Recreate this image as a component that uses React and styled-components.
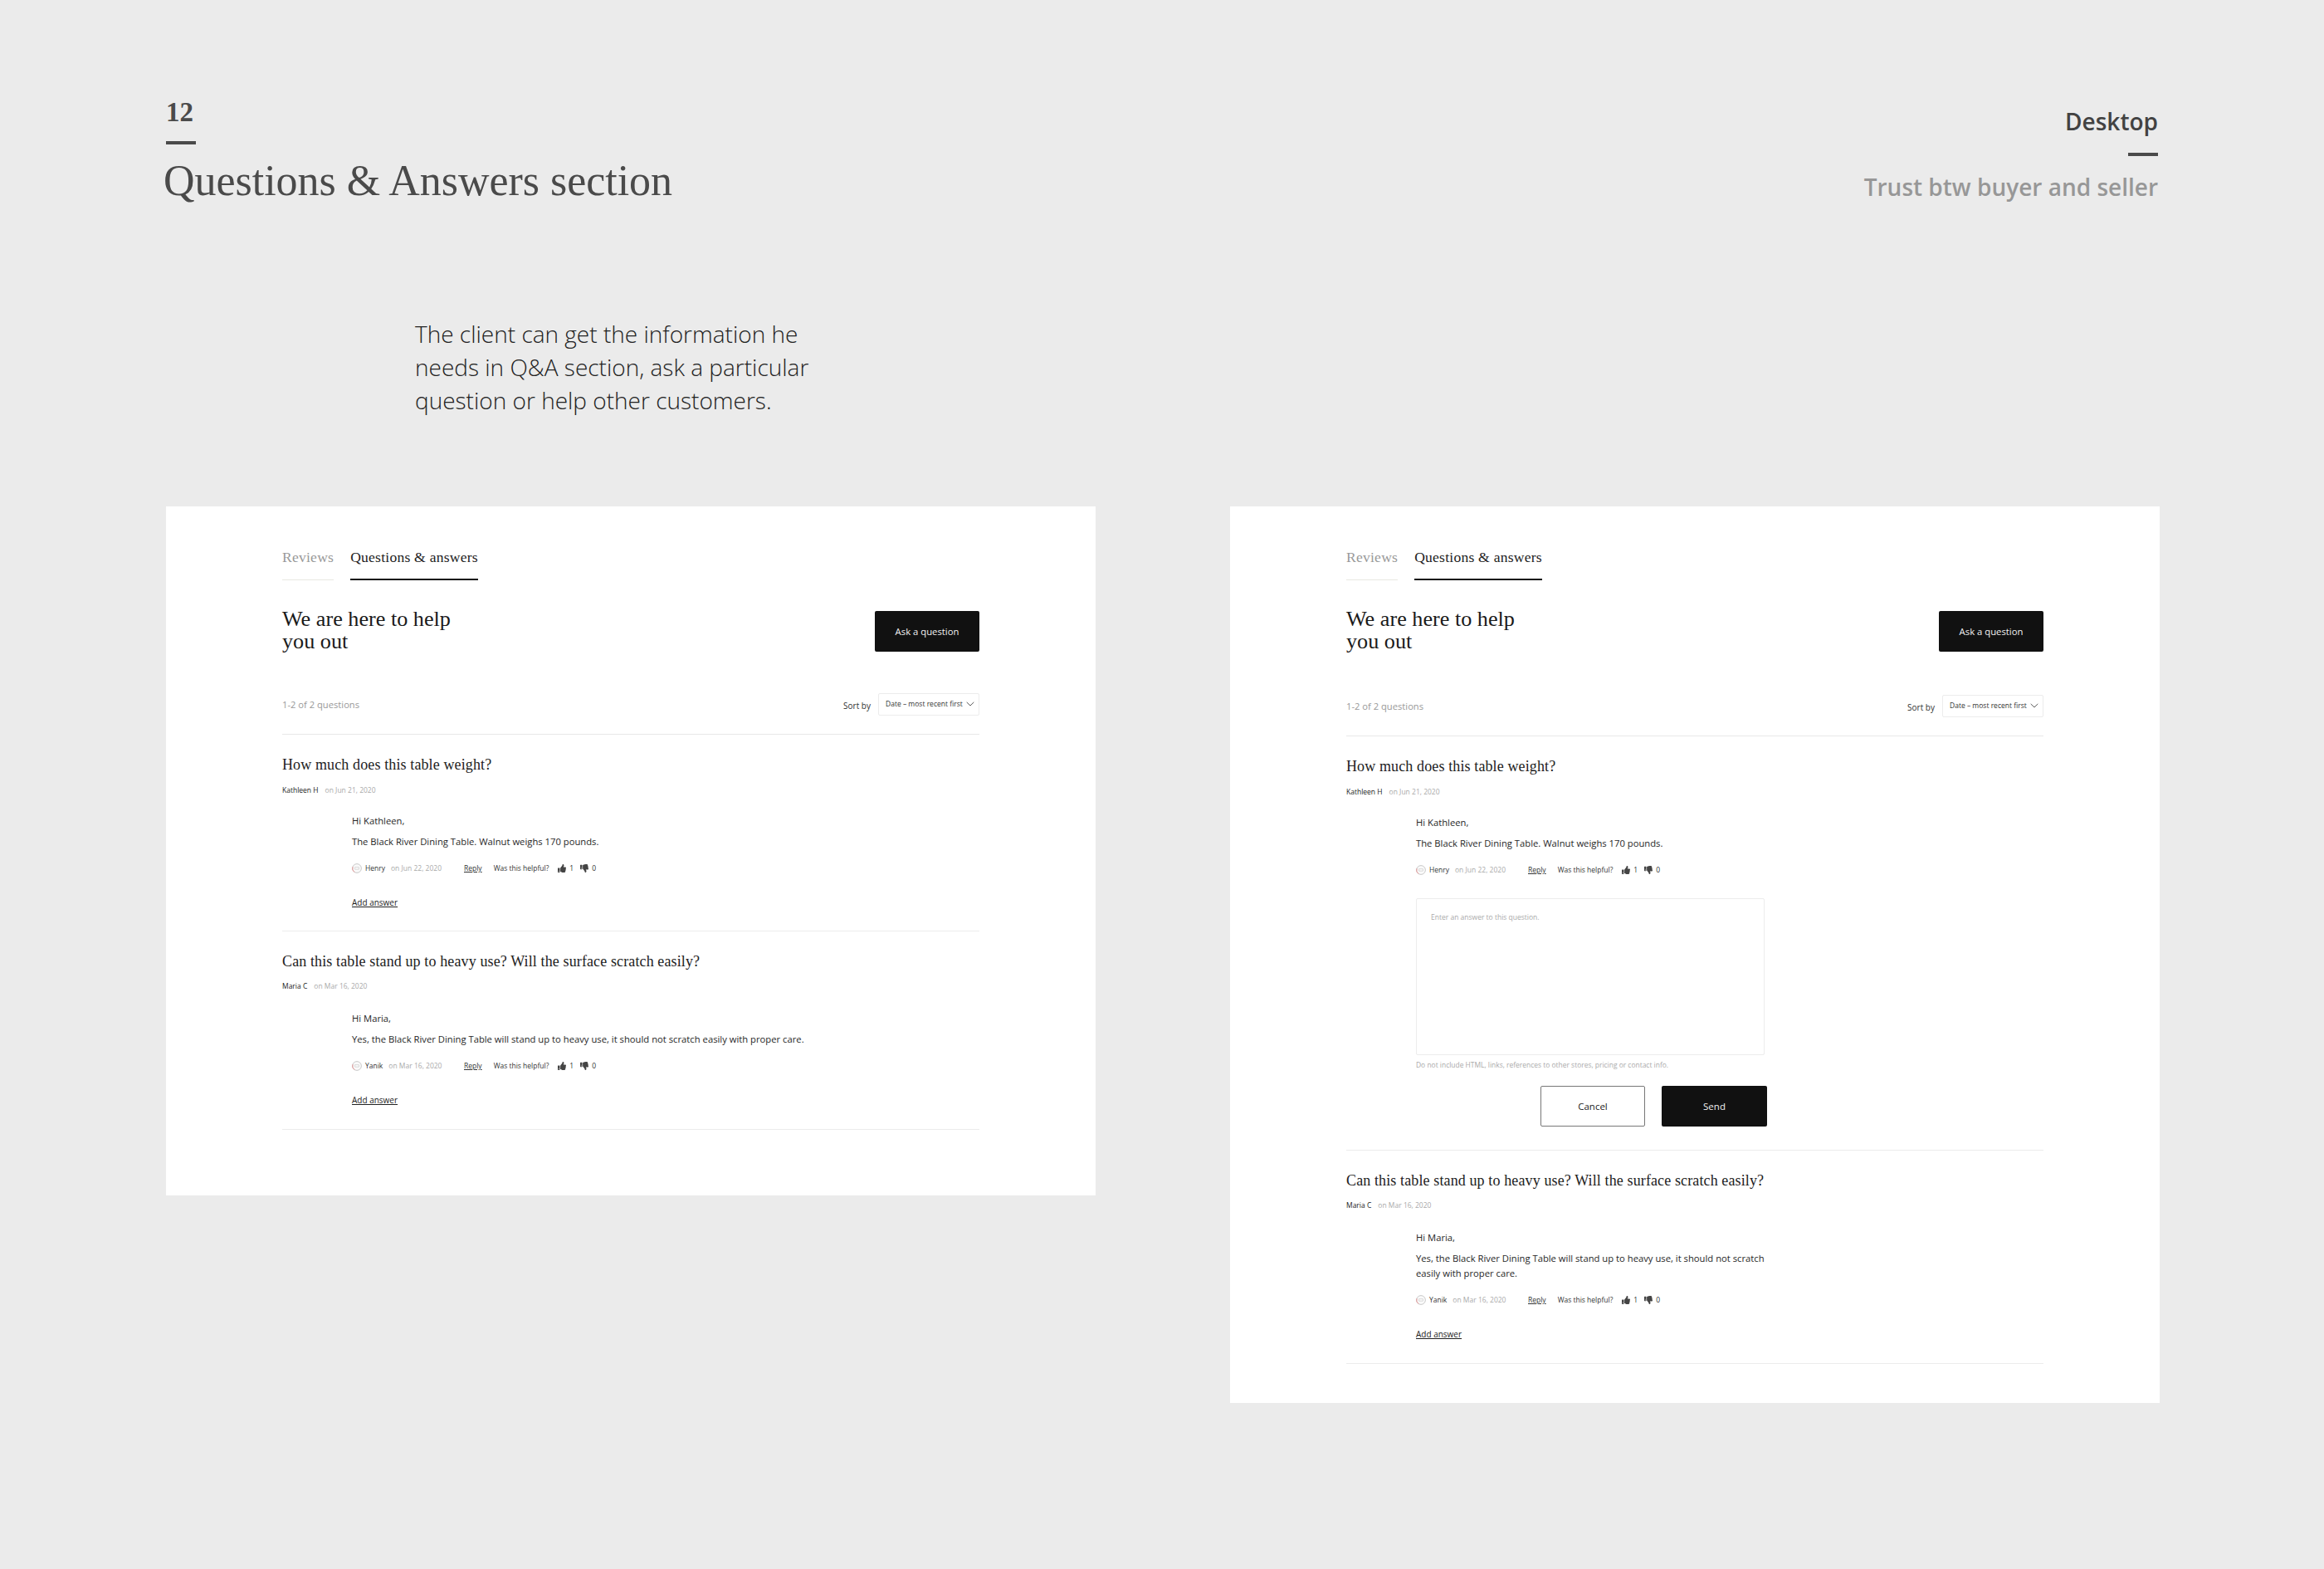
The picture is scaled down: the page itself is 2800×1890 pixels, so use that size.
import React from "react";
import styled, { createGlobalStyle } from "styled-components";
import { FaThumbsUp, FaThumbsDown } from "react-icons/fa";

const SERIF = `"Liberation Serif", "Times New Roman", serif`;
const SANS = `"Open Sans", "Noto Sans", sans-serif`;

const Global = createGlobalStyle`
  html, body { margin: 0; padding: 0; background: #ebebeb; }
  * { box-sizing: border-box; }
`;

const Page = styled.div`
  width: 2800px;
  height: 1890px;
  background: #ebebeb;
  padding: 118px 198px 0 200px;
  font-family: ${SANS};
  overflow: hidden;
`;
const Header = styled.header`
  display: flex;
  justify-content: space-between;
  align-items: flex-start;
  height: 264px;
  padding-right: 2px;
`;
const HeaderLeft = styled.div`
  display: flex;
  flex-direction: column;
  align-items: flex-start;
`;
const SectionNumber = styled.div`
  font: 700 33px/34px ${SERIF};
  color: #4a4a4a;
  height: 34px;
`;
const HeaderRule = styled.div`
  width: 36px;
  height: 4px;
  background: #4a4a4a;
  margin-top: ${p => p.$top}px;
`;
const Title = styled.h1`
  margin: 13px 0 0 -3px;
  font: 400 52px/62px ${SERIF};
  letter-spacing: -0.03px;
  color: #4a4a4a;
  white-space: nowrap;
`;
const HeaderRight = styled.div`
  display: flex;
  flex-direction: column;
  align-items: flex-end;
  padding-top: 9px;
`;
const Platform = styled.div`
  font: 600 28px/38px ${SANS};
  color: #424242;
`;
const Theme = styled.div`
  margin-top: 17px;
  font: 600 28px/40px ${SANS};
  color: #979797;
`;
const Intro = styled.p`
  margin: 0 0 0 300px;
  width: 520px;
  height: 228px;
  font: 300 28px/40px ${SANS};
  color: #222;
`;
const Cards = styled.div`
  display: flex;
  justify-content: space-between;
  align-items: flex-start;
`;
const Card = styled.section`
  width: 1120px;
  height: ${p => p.$height}px;
  background: #fff;
  padding: 49px 140px 0;
`;
const Tabs = styled.nav`
  display: flex;
  gap: 20px;
`;
const Tab = styled.div`
  font: 400 17.6px/24px ${SERIF};
  letter-spacing: 0.22px;
  color: ${p => (p.$active ? "#222" : "#999")};
  padding-bottom: 13px;
  border-bottom: ${p => (p.$active ? "2px solid #111" : "1px solid #e8e8e2")};
  height: 40px;
`;
const Lead = styled.div`
  display: flex;
  justify-content: space-between;
  align-items: flex-end;
  margin-top: 33px;
`;
const Heading = styled.h2`
  margin: 0;
  font: 400 26.2px/27px ${SERIF};
  color: #1a1a1a;
`;
const DarkButton = styled.button`
  width: ${p => p.$w}px;
  height: 49px;
  border: 0;
  border-radius: 2px;
  background: #111;
  color: #f2f2f2;
  font: 400 ${p => p.$size}px/1 ${SANS};
  padding: 0;
  margin-bottom: ${p => p.$mb || 0}px;
`;
const OutlineButton = styled.button`
  width: 126px;
  height: 49px;
  border: 1px solid #777;
  border-radius: 2px;
  background: #fff;
  color: #222;
  font: 400 11.5px/1 ${SANS};
  padding: 0;
`;
const Toolbar = styled.div`
  display: flex;
  justify-content: space-between;
  align-items: center;
  margin-top: ${p => p.$top}px;
  padding-bottom: 22px;
  border-bottom: 1px solid #e8e8e8;
`;
const Count = styled.div`
  font: 400 11.2px/14px ${SANS};
  color: #999;
`;
const SortGroup = styled.div`
  display: flex;
  align-items: center;
  gap: 9px;
`;
const SortLabel = styled.span`
  font: 400 10px/14px ${SANS};
  color: #333;
  padding-top: 3px;
`;
const Select = styled.div`
  width: 122px;
  height: 27px;
  border: 1px solid #ececec;
  border-radius: 2px;
  display: flex;
  align-items: center;
  gap: 4px;
  padding: 0 0 1px 8px;
  font: 400 8.5px/1 ${SANS};
  color: #333;
  white-space: nowrap;
`;
const Question = styled.article`
  padding: 24px 0 ${p => p.$pb}px;
  border-bottom: 1px solid #ececec;
`;
const QuestionTitle = styled.h3`
  margin: 0;
  font: 400 18px/24px ${SERIF};
  letter-spacing: 0.12px;
  color: #222;
`;
const Meta = styled.div`
  margin-top: ${p => p.$top}px;
  display: flex;
  gap: 8px;
  font: 400 8.5px/14px ${SANS};
  color: #222;
`;
const Muted = styled.span`
  color: #aaa;
`;
const Answer = styled.div`
  margin: ${p => p.$top}px 0 0 84px;
`;
const Para = styled.p`
  margin: ${p => p.$top}px 0 0;
  font: 400 11.25px/${p => p.$lh || 18}px ${SANS};
  color: #262626;
  width: ${p => (p.$wide ? "auto" : "430px")};
`;
const Actions = styled.div`
  margin-top: 15px;
  display: flex;
  align-items: center;
  height: 16px;
  font: 400 8.5px/16px ${SANS};
  color: #333;
`;
const Author = styled.span`
  display: flex;
  align-items: center;
  gap: 4px;
  width: 135px;
`;
const Stamp = styled.span`
  color: #aaa;
  margin-left: 3px;
`;
const ReplyLink = styled.a`
  text-decoration: underline;
  color: #333;
  margin-right: 14px;
`;
const Vote = styled.span`
  display: inline-flex;
  align-items: center;
  gap: 4px;
  margin-left: ${p => p.$left}px;
  svg { width: 10px; height: 10px; color: #444; }
`;
const AddAnswer = styled.a`
  display: block;
  margin-top: 25px;
  font: 400 10px/16px ${SANS};
  color: #222;
  text-decoration: underline;
`;
const Form = styled.div`
  margin-top: 26px;
  width: 423px;
`;
const TextBox = styled.div`
  width: 420px;
  height: 189px;
  border: 1px solid #ececec;
  border-radius: 2px;
  padding: 15px 17px;
  font: 400 8.5px/14px ${SANS};
  color: #aaa;
`;
const Hint = styled.div`
  margin-top: 5px;
  font: 400 8.45px/14px ${SANS};
  color: #aaa;
`;
const FormButtons = styled.div`
  margin-top: 18px;
  display: flex;
  justify-content: flex-end;
  gap: 20px;
`;

const Avatar = () => (
  <svg width="12" height="12" viewBox="0 0 12 12" aria-hidden="true">
    <circle cx="6" cy="6" r="5.4" fill="#fafafa" stroke="#bdbdbd" strokeWidth="0.8" />
    <path d="M1 4.2A5.4 5.4 0 0 0 3.2 10.6" fill="none" stroke="#e58f8f" strokeWidth="0.9" />
    <path d="M3.6 4.6h4.8v2.6H3.6z" fill="none" stroke="#cfcfcf" strokeWidth="0.7" />
  </svg>
);

const Chevron = () => (
  <svg width="10" height="6" viewBox="0 0 10 6" aria-hidden="true">
    <path d="M.7.9 5 5 9.3.9" fill="none" stroke="#333" strokeWidth="0.8" />
  </svg>
);

const ActionRow = ({ name, date }) => (
  <Actions>
    <Author>
      <Avatar />
      <span>{name}</span>
      <Stamp>on {date}</Stamp>
    </Author>
    <ReplyLink>Reply</ReplyLink>
    <span>Was this helpful?</span>
    <Vote $left={11}><FaThumbsUp />1</Vote>
    <Vote $left={8}><FaThumbsDown />0</Vote>
  </Actions>
);

const ANSWER_1 = "The Black River Dining Table. Walnut weighs 170 pounds.";
const ANSWER_2 = "Yes, the Black River Dining Table will stand up to heavy use, it should not scratch easily with proper care.";

const QuestionBlock = ({ title, asker, asked, greeting, body, wide, name, date, pb, metaTop, answerTop, form }) => (
  <Question $pb={pb}>
    <QuestionTitle>{title}</QuestionTitle>
    <Meta $top={metaTop}><span>{asker}</span><Muted>on {asked}</Muted></Meta>
    <Answer $top={answerTop}>
      <Para $top={0} $lh={16}>{greeting}</Para>
      <Para $top={8} $wide={wide}>{body}</Para>
      <ActionRow name={name} date={date} />
      {form ? (
        <Form>
          <TextBox>Enter an answer to this question.</TextBox>
          <Hint>Do not include HTML, links, references to other stores, pricing or contact info.</Hint>
          <FormButtons>
            <OutlineButton>Cancel</OutlineButton>
            <DarkButton $w={127} $size={11.5}>Send</DarkButton>
          </FormButtons>
        </Form>
      ) : (
        <AddAnswer>Add answer</AddAnswer>
      )}
    </Answer>
  </Question>
);

const Panel = ({ height, top, children }) => (
  <Card $height={height}>
    <Tabs>
      <Tab>Reviews</Tab>
      <Tab $active>Questions &amp; answers</Tab>
    </Tabs>
    <Lead>
      <Heading>We are here to help<br />you out</Heading>
      <DarkButton $w={126} $size={11.3} $mb={1}>Ask a question</DarkButton>
    </Lead>
    <Toolbar $top={top}>
      <Count>1-2 of 2 questions</Count>
      <SortGroup>
        <SortLabel>Sort by</SortLabel>
        <Select>Date – most recent first <Chevron /></Select>
      </SortGroup>
    </Toolbar>
    {children}
  </Card>
);

export default function App() {
  return (
    <Page>
      <Global />
      <Header>
        <HeaderLeft>
          <SectionNumber>12</SectionNumber>
          <HeaderRule $top={18} />
          <Title>Questions &amp; Answers section</Title>
        </HeaderLeft>
        <HeaderRight>
          <Platform>Desktop</Platform>
          <HeaderRule $top={19} />
          <Theme>Trust btw buyer and seller</Theme>
        </HeaderRight>
      </Header>
      <Intro>The client can get the information he needs in Q&amp;A section, ask a particular question or help other customers.</Intro>
      <Cards>
        <Panel height={830} top={49}>
          <QuestionBlock title="How much does this table weight?" asker="Kathleen H" asked="Jun 21, 2020"
            greeting="Hi Kathleen," body={ANSWER_1} name="Henry" date="Jun 22, 2020" pb={26} metaTop={12} answerTop={22} />
          <QuestionBlock title="Can this table stand up to heavy use? Will the surface scratch easily?" asker="Maria C" asked="Mar 16, 2020"
            greeting="Hi Maria," body={ANSWER_2} wide name="Yanik" date="Mar 16, 2020" pb={27} metaTop={11} answerTop={24} />
        </Panel>
        <Panel height={1080} top={51}>
          <QuestionBlock form title="How much does this table weight?" asker="Kathleen H" asked="Jun 21, 2020"
            greeting="Hi Kathleen," body={ANSWER_1} name="Henry" date="Jun 22, 2020" pb={28} metaTop={12} answerTop={22} />
          <QuestionBlock title="Can this table stand up to heavy use? Will the surface scratch easily?" asker="Maria C" asked="Mar 16, 2020"
            greeting="Hi Maria," body={ANSWER_2} name="Yanik" date="Mar 16, 2020" pb={27} metaTop={11} answerTop={24} />
        </Panel>
      </Cards>
    </Page>
  );
}
